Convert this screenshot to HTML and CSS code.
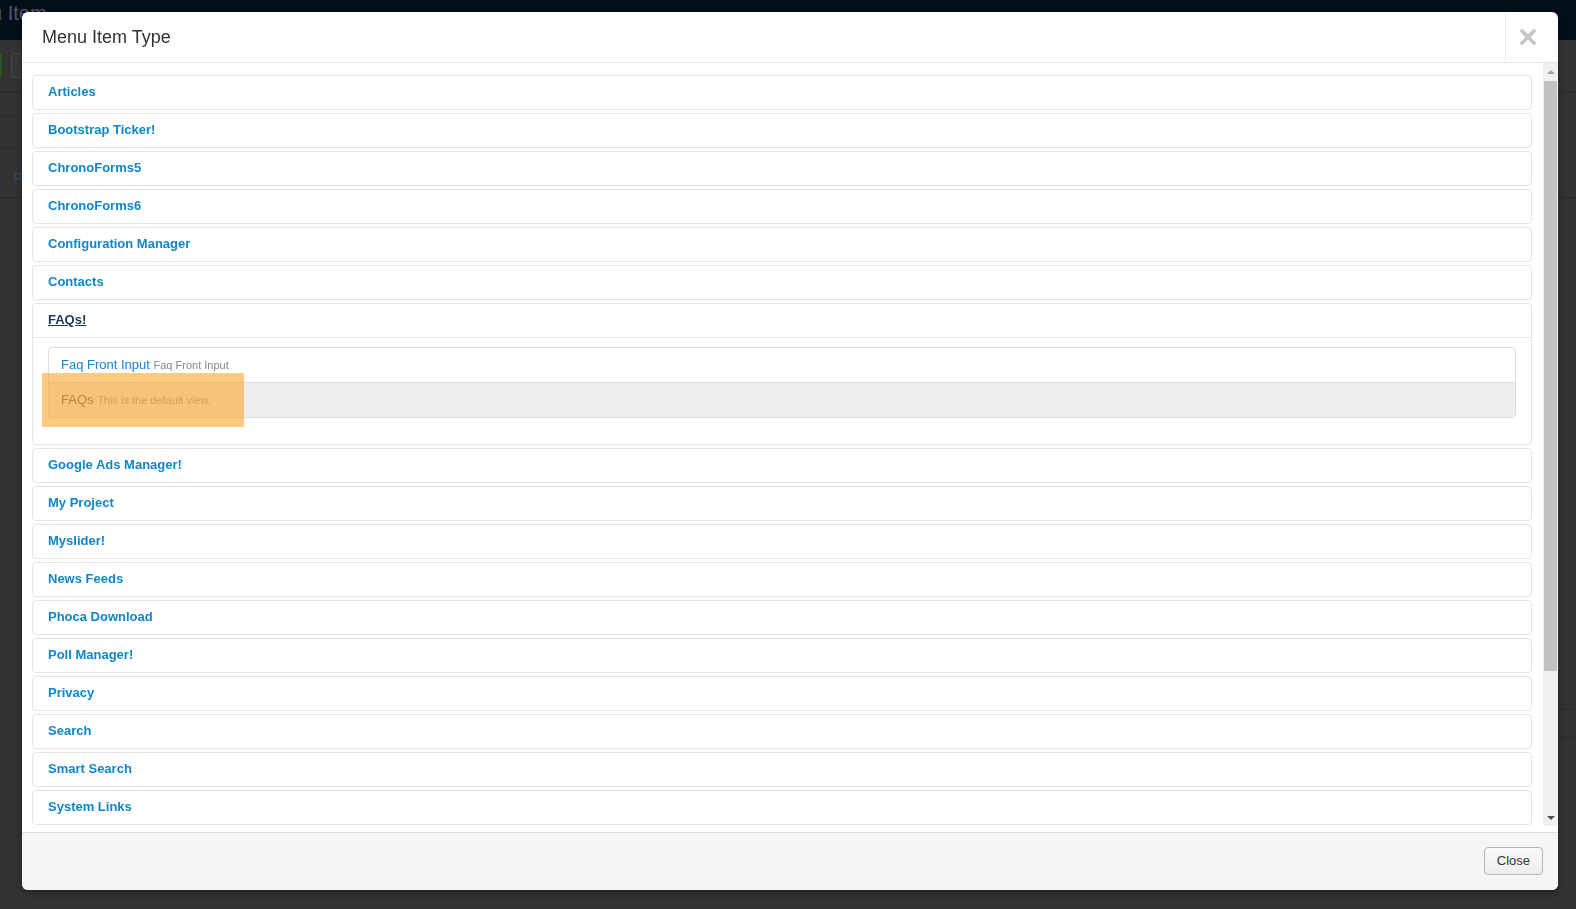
FILE: index.html
```html
<!DOCTYPE html>
<html lang="en">
<head>
  <meta charset="UTF-8" />
  <meta name="viewport" content="width=device-width, initial-scale=1.0"/>
  <title>Menus: Edit Menu Item</title>
  <link rel="stylesheet" href="styles.css">
</head>
<body>
  <!-- page behind the modal, already dimmed -->
  <div class="backdrop">
    <div class="topbar"><h1 class="page-title">Menus: Edit Menu Item</h1></div>
    <div class="toolbar">
      <span class="tb-btn tb-save"></span>
      <span class="tb-btn tb-plain"></span>
    </div>
    <div class="sub-row"></div>
    <div class="sub-row tall"></div>
    <div class="title-row">P</div>
    <div class="form-area"></div>
    <div class="form-row"></div>
  </div>

  <div class="modal">
    <div class="modal-header">
      <h3 class="modal-title">Menu Item Type</h3>
      <span class="modal-close">
        <svg width="16" height="16" viewBox="0 0 16 16"><path d="M2 2L14 14M14 2L2 14" stroke="#c6c6c6" stroke-width="3.6" stroke-linecap="square"/></svg>
      </span>
    </div>

    <div class="modal-body">
      <div class="type-list">
        <div class="group"><a class="group-toggle" href="#">Articles</a></div>
        <div class="group"><a class="group-toggle" href="#">Bootstrap Ticker!</a></div>
        <div class="group"><a class="group-toggle" href="#">ChronoForms5</a></div>
        <div class="group"><a class="group-toggle" href="#">ChronoForms6</a></div>
        <div class="group"><a class="group-toggle" href="#">Configuration Manager</a></div>
        <div class="group"><a class="group-toggle" href="#">Contacts</a></div>
        <div class="group open">
          <a class="group-toggle" href="#">FAQs!</a>
          <div class="group-body">
            <ul class="nav-list">
              <li><a href="#">Faq Front Input <small>Faq Front Input</small></a></li>
              <li class="active"><a href="#">FAQs <small>This is the default view.</small></a></li>
            </ul>
            <div class="tour-highlight"></div>
          </div>
        </div>
        <div class="group"><a class="group-toggle" href="#">Google Ads Manager!</a></div>
        <div class="group"><a class="group-toggle" href="#">My Project</a></div>
        <div class="group"><a class="group-toggle" href="#">Myslider!</a></div>
        <div class="group"><a class="group-toggle" href="#">News Feeds</a></div>
        <div class="group"><a class="group-toggle" href="#">Phoca Download</a></div>
        <div class="group"><a class="group-toggle" href="#">Poll Manager!</a></div>
        <div class="group"><a class="group-toggle" href="#">Privacy</a></div>
        <div class="group"><a class="group-toggle" href="#">Search</a></div>
        <div class="group"><a class="group-toggle" href="#">Smart Search</a></div>
        <div class="group"><a class="group-toggle" href="#">System Links</a></div>
      </div>
      <div class="scrollbar">
        <span class="sb-btn">
          <svg width="8" height="4" viewBox="0 0 8 4"><path d="M0 4L4 0L8 4Z" fill="#a3a3a3"/></svg>
        </span>
        <div class="sb-track"><div class="sb-thumb"></div></div>
        <span class="sb-btn">
          <svg width="8" height="4" viewBox="0 0 8 4"><path d="M0 0L8 0L4 4Z" fill="#505050"/></svg>
        </span>
      </div>
    </div>

    <div class="modal-footer">
      <button class="btn" type="button">Close</button>
    </div>
  </div>
</body>
</html>
```

FILE: styles.css
```css
body {
  margin: 0; height: 909px; overflow: hidden;
  background: #323232;
  font-family: "Liberation Sans", Arial, sans-serif;
}

/* dimmed page */
.topbar { height: 40px; background: #040f1a; overflow: hidden; }
.page-title {
  margin: 0; font-size: 20px; font-weight: normal; line-height: 26px;
  color: #4a5868; white-space: nowrap; text-indent: -159px;
}
.toolbar {
  height: 53px; box-sizing: border-box; padding-top: 13px;
  border-bottom: 1px solid #282828;
  display: flex; align-items: flex-start; gap: 9px;
}
.tb-btn { display: block; height: 25px; border-radius: 3px; box-sizing: border-box; }
.tb-save { width: 60px; margin-left: -58px; background: #2c5220; }
.tb-plain { width: 80px; background: #363636; border: 1px solid #464646; }
.sub-row { width: 600px; height: 24px; box-sizing: border-box; border-bottom: 1px solid #2a2a2a; }
.sub-row.tall { height: 31px; }
.title-row {
  height: 50px; box-sizing: border-box; border-bottom: 1px solid #282828;
  padding: 21px 0 0 13px; font-size: 15px; line-height: 18px; color: #34475a;
}
.form-area { height: 512px; box-sizing: border-box; margin-left: 900px; border-bottom: 1px solid #2a2a2a; }
.form-row { height: 28px; box-sizing: border-box; margin-left: 900px; border-bottom: 1px solid #2a2a2a; }

/* modal */
.modal {
  position: fixed; top: 12px; left: 22px; width: 1536px; height: 878px;
  background: #fff; border-radius: 6px; overflow: hidden;
  box-shadow: 0 3px 7px rgba(0, 0, 0, 0.3);
  display: flex; flex-direction: column;
}
.modal-header {
  height: 51px; flex: none; box-sizing: border-box;
  border-bottom: 1px solid #e5e5e5; display: flex;
}
.modal-title {
  flex: 1; margin: 0; padding-left: 20px;
  font-size: 18px; font-weight: normal; line-height: 50px; color: #333;
}
.modal-close {
  width: 53px; border-left: 1px solid #eee;
  display: flex; align-items: center; justify-content: center;
  padding-right: 8px; box-sizing: border-box;
}
.modal-body { flex: 1; min-height: 0; margin-bottom: 6px; display: flex; }
.type-list { flex: 1; overflow: hidden; padding: 12px 11px 0 10px; }

/* scrollbar of the list */
.scrollbar { width: 15px; flex: none; background: #f1f1f1; display: flex; flex-direction: column; }
.sb-btn { height: 17px; flex: none; display: flex; align-items: center; justify-content: center; }
.sb-btn svg { display: block; }
.sb-track { flex: 1; padding-top: 1px; }
.sb-thumb { height: 590px; margin: 0 1px; background: #c1c1c1; }

.group { border: 1px solid #e5e5e5; border-radius: 4px; margin-bottom: 3px; }
.group-toggle {
  display: block; padding: 7px 15px 9px;
  font-size: 13px; line-height: 17px; font-weight: bold;
  color: #0f86c9; text-decoration: none;
}
.group.open .group-toggle { color: #1a3656; text-decoration: underline; }
.group-body { border-top: 1px solid #e5e5e5; padding: 9px 15px; position: relative; }

.nav-list {
  list-style: none; margin: 0 0 17px; padding: 0;
  border: 1px solid #ddd; border-radius: 4px; overflow: hidden;
}
.nav-list li + li { border-top: 1px solid #ddd; }
.nav-list a {
  display: block; padding: 8px 12px;
  font-size: 13px; line-height: 18px; color: #1f82c4; text-decoration: none;
}
.nav-list small { font-size: 11px; color: #888; }
.nav-list .active a { background: #eee; color: #555; }
.nav-list .active small { color: #999; }

.tour-highlight {
  position: absolute; left: 9px; top: 35px; width: 202px; height: 54px;
  background: rgba(251, 165, 40, 0.59);
}

.modal-footer {
  height: 58px; flex: none; box-sizing: border-box;
  border-top: 1px solid #ddd; background: #f5f5f5;
  padding: 14px 15px 0; display: flex; justify-content: flex-end; align-items: flex-start;
}
.btn {
  font-family: "Liberation Sans", Arial, sans-serif; font-size: 13px; line-height: 18px;
  padding: 4px 12px; color: #333; cursor: pointer;
  border: 1px solid #b5b5b5; border-radius: 4px;
  background: linear-gradient(#fafafa, #ededed);
}
```
